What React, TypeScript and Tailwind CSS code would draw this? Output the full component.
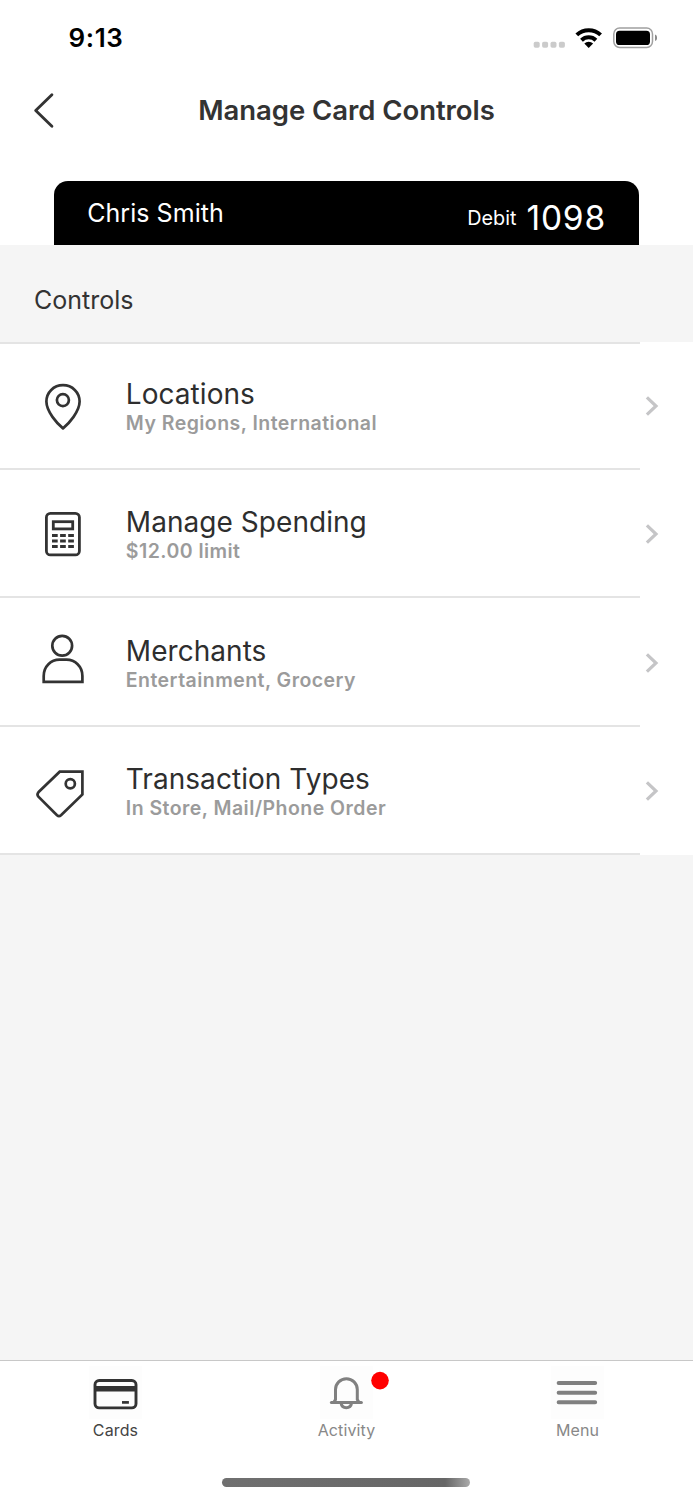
import type { ReactNode } from "react";
import clsx from "clsx";

function StatusBar() {
  return (
    <div className="flex h-[76px] items-center justify-between pr-9 pl-[68.5px]">
      <span className="text-[26px] leading-[76px] font-semibold tracking-[0.65px] text-black">9:13</span>
      <svg width="125" height="24" viewBox="532 26 125 24" fill="none">
        <g fill="#cbcbcb">
          <rect x="533.7" y="41.7" width="6" height="6" rx="1.7" />
          <rect x="542.1" y="41.7" width="6" height="6" rx="1.7" />
          <rect x="550.5" y="41.7" width="6" height="6" rx="1.7" />
          <rect x="558.9" y="41.7" width="6" height="6" rx="1.7" />
        </g>
        <g stroke="#000" strokeWidth="4">
          <path d="M576.8 34.9A17.4 17.4 0 0 1 600.6 34.9" />
          <path d="M581.5 40.2A10.4 10.4 0 0 1 595.9 40.2" />
        </g>
        <path d="M588.7 47.9L584.3 43.5A6.3 6.3 0 0 1 593.1 43.5Z" fill="#000" />
        <rect x="613.8" y="28.1" width="38.7" height="19.3" rx="5.8" stroke="#a0a0a0" strokeWidth="1.5" />
        <rect x="616" y="30.8" width="34" height="14.2" rx="3.6" fill="#000" />
        <path d="M655 34.5a3.6 3.6 0 0 1 0 6.6Z" fill="#8c8c8c" />
      </svg>
    </div>
  );
}

function Header() {
  return (
    <header className="grid h-[68px] grid-cols-[60px_1fr_60px] items-center">
      <svg className="ml-8" width="24" height="40" viewBox="32.2 89.8 24 40" fill="none" stroke="#333" strokeWidth="2.9" strokeLinecap="round" strokeLinejoin="round">
        <path d="M52.1 94.6L35.9 110.3L52.1 126" />
      </svg>
      <h1 className="text-center text-[27.5px] leading-10 font-semibold tracking-[-0.05px] text-[#333]">
        Manage Card Controls
      </h1>
    </header>
  );
}

function PinIcon() {
  return (
    <svg width="64" height="64" viewBox="32 372 64 64" fill="none" stroke="#333" strokeWidth="2.7">
      <path d="M63 428.4C57 423.5 46.4 411.5 46.4 401.6C46.4 392.3 53.7 385.2 63 385.2S79.6 392.3 79.6 401.6C79.6 411.5 69 423.5 63 428.4Z" strokeLinejoin="round" />
      <circle cx="62.9" cy="400.1" r="6" />
    </svg>
  );
}

function CalculatorIcon() {
  return (
    <svg width="64" height="64" viewBox="32 500.2 64 64" fill="none" stroke="#333" strokeWidth="2.8">
      <rect x="46.4" y="513.5" width="33" height="41.6" rx="4" />
      <rect x="53.3" y="521.9" width="19.4" height="7.2" />
      <g strokeWidth="3">
        <path d="M52 535.6H73.9" strokeDasharray="5.7 2.4" />
        <path d="M52 541.2H73.9" strokeDasharray="5.7 2.4" />
        <path d="M52 546.6H73.9" strokeDasharray="5.7 2.4" />
      </g>
    </svg>
  );
}

function PersonIcon() {
  return (
    <svg width="64" height="64" viewBox="32 629 64 64" fill="none" stroke="#333" strokeWidth="2.7">
      <circle cx="62.2" cy="645.8" r="9.9" />
      <path d="M43.7 681.8V676C43.7 666.5 51 659.7 59.5 659.7H66.5C75 659.7 82.4 666.5 82.4 676V681.8Z" />
    </svg>
  );
}

function TagIcon() {
  return (
    <svg width="64" height="64" viewBox="32 757 64 64" fill="none" stroke="#333" strokeWidth="2.7">
      <path d="M59.7 771.7H82.4V794.4L61 815.2Q59 816.9 57 815.2L38.4 796.6Q36.6 794.4 38.4 792.3Z" />
      <circle cx="70.3" cy="783.7" r="4.6" />
    </svg>
  );
}

type ControlRow = { title: string; detail: string; icon: ReactNode; height: string };

const rows: ControlRow[] = [
  { title: "Locations", detail: "My Regions, International", icon: <PinIcon />, height: "h-[126px]" },
  { title: "Manage Spending", detail: "$12.00 limit", icon: <CalculatorIcon />, height: "h-[128px]" },
  { title: "Merchants", detail: "Entertainment, Grocery", icon: <PersonIcon />, height: "h-[129px]" },
  { title: "Transaction Types", detail: "In Store, Mail/Phone Order", icon: <TagIcon />, height: "h-[128px]" },
];

function Row({ title, detail, icon, height }: ControlRow) {
  return (
    <li className={clsx("flex flex-col justify-end", height)}>
      <div className="flex h-24 items-start pl-8">
        {icon}
        <div className="ml-[29.8px] flex flex-1 flex-col pt-[5px]">
          <span className="text-[28px] leading-[34px] tracking-[0.05px] text-[#2e2e2e]">{title}</span>
          <span className="text-[19.5px] leading-6 font-semibold tracking-[0.46px] text-[#9b9b9b]">{detail}</span>
        </div>
        <svg className="mt-[22px] mr-[33px]" width="16" height="24" viewBox="644 394 16 24" fill="none" stroke="#c5c5c7" strokeWidth="3.2">
          <path d="M646.9 397.3L656 406L646.9 414.7" />
        </svg>
      </div>
      <div className="h-0.5 w-160 shrink-0 bg-[#e4e4e4]" />
    </li>
  );
}

function Tab({ label, active, dot, children }: { label: string; active?: boolean; dot?: boolean; children: ReactNode }) {
  return (
    <button className={clsx("flex w-[231px] flex-col items-center pt-[5px]", active ? "text-[#333]" : "text-[#808080]")}>
      <span className="relative size-[53px] bg-[#fdfdfd]">
        {children}
        {dot && (
          <svg className="absolute top-[5px] -right-[17px]" width="20" height="20" viewBox="0 0 20 20">
            <circle cx="10" cy="9.6" r="8.8" fill="#ff0000" />
          </svg>
        )}
      </span>
      <span className={clsx("text-base leading-[23px] tracking-[0.13px]", active ? "text-[#444]" : "text-[#888]")}>{label}</span>
    </button>
  );
}

function TabBar() {
  return (
    <nav className="flex h-[140px] flex-col border-t border-[#c8c8c8] bg-white">
      <div className="flex h-[117px]">
        <Tab label="Cards" active>
          <svg width="53" height="53" viewBox="89.4 1366 53 53" fill="none" stroke="currentColor" strokeWidth="2.9">
            <rect x="95.4" y="1380.5" width="41" height="27.4" rx="4.2" />
            <path d="M95 1388.7H137" strokeWidth="5.4" />
            <path d="M122.4 1402.4H129.3" strokeWidth="2.7" />
          </svg>
        </Tab>
        <Tab label="Activity" dot>
          <svg width="53" height="53" viewBox="320.2 1366 53 53" fill="none" stroke="currentColor" strokeWidth="3">
            <path d="M331.6 1402.4H361.6" strokeLinecap="round" />
            <path d="M334.2 1402L335.7 1399.5V1389.6A10.9 10.9 0 0 1 357.5 1389.6V1399.5L359 1402" />
            <path d="M341.2 1403C342.2 1409.3 350.8 1409.3 351.8 1403" />
          </svg>
        </Tab>
        <Tab label="Menu">
          <svg width="53" height="53" viewBox="551 1366 53 53" fill="none" stroke="currentColor" strokeWidth="3.9" strokeLinecap="round">
            <path d="M558.6 1383H595.2M558.6 1392.7H595.2M558.6 1402.3H595.2" />
          </svg>
        </Tab>
      </div>
      <div className="ml-[222px] h-[8.5px] w-[248px] rounded-full bg-linear-to-r from-[#707070] via-[#666] via-90% to-[#aaa]" />
    </nav>
  );
}

export default function App() {
  return (
    <div className="flex h-[1500px] w-[693px] flex-col overflow-hidden bg-[#f5f5f5] font-['Inter',sans-serif]">
      <div className="bg-white">
        <StatusBar />
        <Header />
        <div className="mx-[53.7px] mt-[37px] flex h-[63.5px] justify-between rounded-t-[14px] bg-black pr-[33.4px] pl-[33.5px] text-white">
          <span className="text-[25px] leading-[64px] tracking-[0.05px]">Chris Smith</span>
          <span className="flex items-start">
            <span className="text-[19.8px] leading-[74px]">Debit</span>
            <span className="ml-[10px] text-[33.5px] leading-[74px] tracking-[0.8px]">1098</span>
          </span>
        </div>
      </div>
      <div className="flex h-[97.5px] items-end justify-between">
        <h2 className="pl-[34px] text-[25px] leading-[84px] text-[#333]">Controls</h2>
      </div>
      <ul className="bg-white">
        <li className="h-0.5 w-160 bg-[#e4e4e4]" />
        {rows.map((row) => (
          <Row key={row.title} {...row} />
        ))}
      </ul>
      <div className="flex-1" />
      <TabBar />
    </div>
  );
}
